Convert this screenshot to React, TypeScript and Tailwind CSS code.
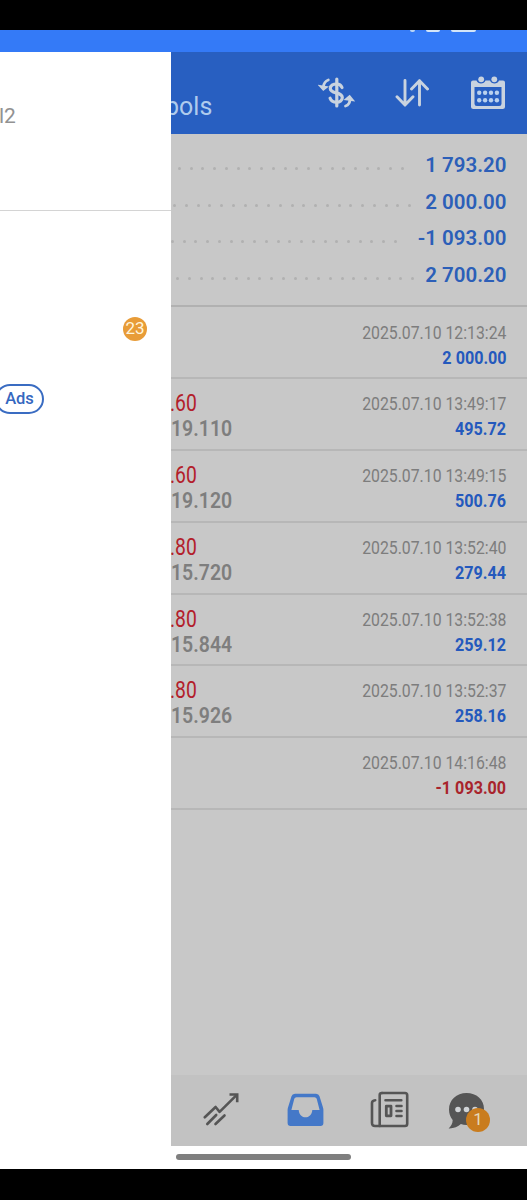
import React from 'react';

type Summary = { value: string; dots: number; pad: string };
type Deal = { date: string; value: string; top?: string; price?: string; loss?: boolean };

const summary: Summary[] = [
  { value: '1 793.20', dots: 20, pad: 'ml-[7px] w-[226px]' },
  { value: '2 000.00', dots: 21, pad: 'ml-[2px] w-[238px]' },
  { value: '-1 093.00', dots: 20, pad: 'ml-[0px] w-[226px]' },
  { value: '2 700.20', dots: 21, pad: 'ml-[5px] w-[238px]' },
];

const deals: Deal[] = [
  { date: '2025.07.10 12:13:24', value: '2 000.00' },
  { date: '2025.07.10 13:49:17', value: '495.72', top: '.60', price: '19.110' },
  { date: '2025.07.10 13:49:15', value: '500.76', top: '.60', price: '19.120' },
  { date: '2025.07.10 13:52:40', value: '279.44', top: '.80', price: '15.720' },
  { date: '2025.07.10 13:52:38', value: '259.12', top: '.80', price: '15.844' },
  { date: '2025.07.10 13:52:37', value: '258.16', top: '.80', price: '15.926' },
  { date: '2025.07.10 14:16:48', value: '-1 093.00', loss: true },
];

function CurrencyIcon() {
  return (
    <svg className="ml-[147px] h-[32px] w-[37px] shrink-0" viewBox="0 0 37 32" fill="none" stroke="#c9d3df" strokeLinecap="round">
      <path d="M18.800 2v27" strokeWidth="3.200" />
      <path d="M24 10.500C22.900 7.800 21 7 18.800 7c-3.800 0-6.500 1.700-6.500 4.500 0 5.800 12 3 12 9 0 3-2.500 4.700-5.700 4.700-3.200 0-5.600-1.500-6.500-4" strokeWidth="3.200" />
      <path d="M10.300 3C7.300 4 5.800 6.300 5.300 10" strokeWidth="2.800" />
      <path d="M1.600 8.800l3.700 4L9 9.900z" fill="#c9d3df" strokeWidth="1.600" />
      <path d="M27.500 29c3.200-1 4.500-3.300 4.500-7" strokeWidth="2.800" />
      <path d="M27.500 22.400l4.100-3.400 3.600 4.400z" fill="#c9d3df" strokeWidth="1.600" />
    </svg>
  );
}

function SortIcon() {
  return (
    <svg className="ml-[40px] h-[30px] w-[34px] shrink-0" viewBox="0 0 34 30" fill="none" stroke="#c9d3df" strokeWidth="2.900" strokeLinecap="round" strokeLinejoin="round">
      <path d="M10 2.500v24.500M2 18.800l8 8.300 8-8.300" />
      <path d="M24.500 27V2.700M16.500 11l8-8.300 8 8.300" />
    </svg>
  );
}

function CalendarIcon() {
  return (
    <svg className="ml-[41px] h-[34px] w-[36px] shrink-0" viewBox="0 0 36 34">
      <path fillRule="evenodd" fill="#c9d3df" d="M3 4.500h3.500c1.200 4 7.800 4 9 0h4.500c1.200 4 7.800 4 9 0H33q2 0 2 2v24q0 2.500-2.500 2.500h-29Q1 33 1 30.500v-24q0-2 2-2zM4.500 11v16.700q0 2.300 2.300 2.300h22.400q2.300 0 2.300-2.300V11z" />
      <circle cx="11.200" cy="3.300" r="2.900" fill="#c9d3df" />
      <circle cx="24.300" cy="3.300" r="2.900" fill="#c9d3df" />
      {[9.2, 15.1, 21, 26.9].map((x) => (
        <g key={x} fill="#b9d1ee">
          <circle cx={x} cy="16.800" r="2.200" />
          <circle cx={x} cy="24.200" r="2.200" />
        </g>
      ))}
    </svg>
  );
}

function TradeIcon() {
  return (
    <svg className="mb-[3px] ml-[32px] h-[34px] w-[36px] shrink-0" viewBox="0 0 36 34" fill="none" stroke="#555" strokeWidth="2.600" strokeLinecap="round" strokeLinejoin="round">
      <path d="M1.800 25.300L12.600 15l4 4.800L33 3.600" />
      <path d="M27.800 2.500h6.400v6.500" strokeLinecap="square" strokeLinejoin="miter" />
      <path d="M4.300 32l8.900-9M12.500 32l9-8.500" />
    </svg>
  );
}

function InboxIcon() {
  return (
    <svg className="mb-[2px] ml-[48px] h-[34px] w-[37px] shrink-0" viewBox="0 0 37 34">
      <path fillRule="evenodd" fill="#4478c8" d="M8 .8h21q2.800 0 3.500 2.500L36 14.500q.4 1.300.4 2.500v13q0 3-3 3H3.600q-3 0-3-3V17q0-1.200.4-2.500L4.500 3.300Q5.200.8 8 .8zM9.500 4.200q-1.700 0-2.200 1.600L4.400 17h7.300c.7 9.800 12.900 9.800 13.600 0h7.300L29.700 5.800q-.5-1.600-2.200-1.600z" />
    </svg>
  );
}

function NewsIcon() {
  return (
    <svg className="mb-[2px] ml-[46px] h-[38px] w-[39px] shrink-0" viewBox="0 0 39 38" fill="none" stroke="#555" strokeWidth="3" strokeLinecap="round" strokeLinejoin="round">
      <path d="M12 2h23q2.200 0 2.200 2.200v28.600q0 2.200-2.200 2.200H5q-3 0-3-3V12q0-2.500 3.200-2.800" strokeWidth="2.600" />
      <path d="M9.700 35V4Q9.700 2 12 2" strokeWidth="2.600" />
      <path d="M15.500 9.300h15.800M26.500 15h5M26.500 20h5M26.500 25h5" strokeWidth="2.600" />
      <path d="M16.300 15.200h4.700v9.600h-4.700z" strokeWidth="2.800" />
    </svg>
  );
}

function ChatIcon() {
  return (
    <svg className="h-[38px] w-[37px]" viewBox="0 0 37 38">
      <path fill="#555" d="M18.500 1C28.500 1 36 7.600 36 17c0 9.500-7.500 16-17.500 16-2.200 0-4-.3-5.600-.9C10 35 5.500 36.700.6 36.500c2.300-2.400 4.100-5 4.100-8.500C2.300 25.300 1 21.600 1 17.500 1 8 8.500 1 18.500 1z" />
      <g fill="#d0d3d6">
        <circle cx="10" cy="17.500" r="2.800" />
        <circle cx="18.500" cy="17.500" r="2.800" />
        <circle cx="27" cy="17.500" r="2.800" />
      </g>
    </svg>
  );
}

function SummaryRow({ value, dots, pad }: Summary) {
  return (
    <div className="flex h-[36.600px] items-center justify-between pr-[20.500px]">
      <div className={`mt-[7px] flex shrink-0 justify-between ${pad}`}>
        {Array.from({ length: dots }, (_, i) => (
          <span key={i} className="size-[3px] rounded-full bg-[#b1b1b1]" />
        ))}
      </div>
      <span className="whitespace-nowrap text-[20.500px] font-semibold text-[#2c5fb8]">{value}</span>
    </div>
  );
}

function DealRow({ date, value, top, price, loss }: Deal) {
  return (
    <div className="flex h-[71.780px] justify-between border-b-2 border-[#b7b7b7] pr-[20.500px] pt-[12px]">
      <div className="w-[80px] whitespace-nowrap text-[23px] leading-[25px]">
        {top && <div className="-ml-px origin-left scale-x-[.84] text-[#b3202b]">{top}</div>}
        {price && <div className="origin-left scale-x-[.865] text-[22.500px] font-semibold text-[#7e7e7e]">{price}</div>}
      </div>
      <div className="flex w-[200px] flex-col items-end whitespace-nowrap text-[19px] leading-[25px]">
        <div className="origin-right scale-x-[.832] text-[#7d7d7d]">{date}</div>
        <div className={`origin-right scale-x-[.85] font-bold ${loss ? 'text-[#a8242c]' : 'text-[#2459bd]'}`}>{value}</div>
      </div>
    </div>
  );
}

export default function App() {
  return (
    <div className="flex h-[1200px] w-[527px] flex-col overflow-hidden bg-black font-['Roboto',sans-serif]">
      <div className="h-[30px] shrink-0" />
      <div className="flex h-[22px] shrink-0 items-start bg-[#347af7] pl-[410px]">
        <span className="h-[2px] w-[5px] rounded-b bg-[#b9d4f5]" />
        <span className="ml-[11px] h-[2px] w-[14px] rounded-b bg-[#d3e5f8]" />
        <span className="ml-[11px] h-[2px] w-[25px] rounded-b bg-[#d3e5f8]" />
      </div>
      <div className="flex h-[1094px] shrink-0">
        <aside className="w-[171px] shrink-0 bg-white">
          <div className="h-[159px] border-b border-[#d4d4d4] pt-[51px]">
            <div className="-ml-px text-[21px] leading-[26px] text-[#929292]">l2</div>
          </div>
          <div className="ml-[123px] mt-[106px] flex size-[24px] items-center justify-center rounded-full bg-[#e89c38] text-[17px] text-[#fff5dc]">23</div>
          <div className="-ml-[5px] mt-[43px] flex h-[30px] w-[49px] items-center justify-center rounded-full border-2 border-[#3a6cc2] pt-px text-[16.500px] font-medium text-[#3567c0]">Ads</div>
        </aside>
        <main className="flex w-[356px] flex-col overflow-hidden bg-[#c8c8c8]">
          <header className="flex h-[82px] shrink-0 items-center bg-[#285fc1]">
            <div className="w-0 whitespace-nowrap pt-[28px] text-[25px] text-[#afcbed]">
              <span className="-ml-[6px]">bols</span>
            </div>
            <CurrencyIcon />
            <SortIcon />
            <CalendarIcon />
          </header>
          <section className="h-[173px] shrink-0 border-b-2 border-[#b1b1b1] pt-[13px]">
            {summary.map((s) => <SummaryRow key={s.value} {...s} />)}
          </section>
          <section className="grow pt-[.5px]">
            {deals.map((d) => <DealRow key={d.date} {...d} />)}
          </section>
          <nav className="flex h-[71px] shrink-0 items-center bg-[#c2c2c2]">
            <TradeIcon />
            <InboxIcon />
            <NewsIcon />
            <div className="relative ml-[39px]">
              <ChatIcon />
              <span className="absolute left-[18px] top-[16px] flex size-[24px] items-center justify-center rounded-full bg-[#c97c1e] text-[17px] text-[#e5d8b8]">1</span>
            </div>
          </nav>
        </main>
      </div>
      <div className="h-[23px] shrink-0 bg-white pl-[176px] pt-[8px]">
        <div className="h-[6px] w-[175px] rounded-full bg-[#7f7f7f]" />
      </div>
    </div>
  );
}
